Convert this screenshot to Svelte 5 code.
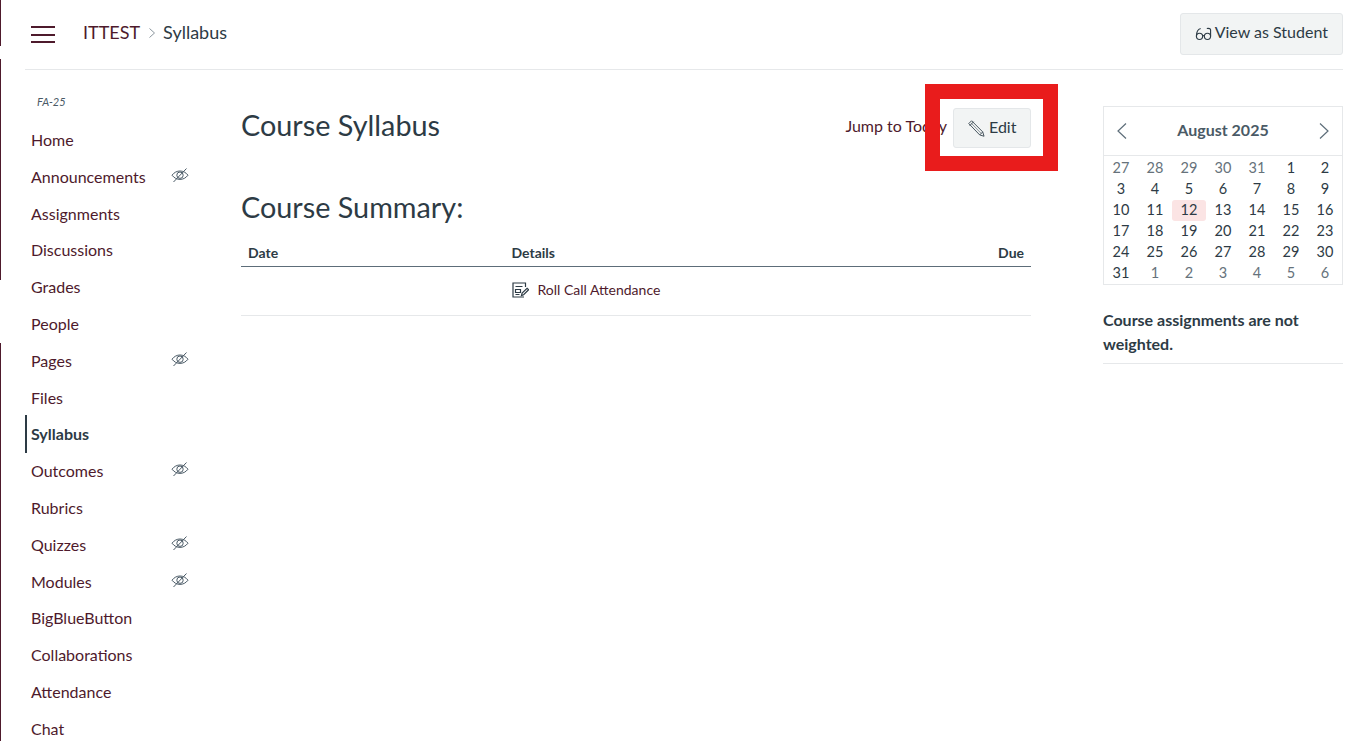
<script>
  const nav = [
    { label: 'Home' },
    { label: 'Announcements', hidden: true },
    { label: 'Assignments' },
    { label: 'Discussions' },
    { label: 'Grades' },
    { label: 'People' },
    { label: 'Pages', hidden: true },
    { label: 'Files' },
    { label: 'Syllabus', active: true },
    { label: 'Outcomes', hidden: true },
    { label: 'Rubrics' },
    { label: 'Quizzes', hidden: true },
    { label: 'Modules', hidden: true },
    { label: 'BigBlueButton' },
    { label: 'Collaborations' },
    { label: 'Attendance' },
    { label: 'Chat' }
  ];

  // August 2025 grid, faded days belong to the other months
  const days = [
    [27, 1], [28, 1], [29, 1], [30, 1], [31, 1], [1], [2],
    [3], [4], [5], [6], [7], [8], [9],
    [10], [11], [12, 0, 1], [13], [14], [15], [16],
    [17], [18], [19], [20], [21], [22], [23],
    [24], [25], [26], [27], [28], [29], [30],
    [31], [1, 1], [2, 1], [3, 1], [4, 1], [5, 1], [6, 1]
  ];
</script>

{#snippet eyeOff()}
  <svg class="eye" viewBox="0 0 18 16" width="18" height="16" fill="none" stroke="#4a5a66" stroke-width="1">
    <path d="M1 8.200C3.200 5.400 5.900 4 9 4s5.800 1.400 8 4.200c-2.200 2.800-4.900 4.200-8 4.200s-5.800-1.400-8-4.200z" />
    <circle cx="9" cy="8.200" r="3.200" />
    <path d="M2.500 15L15.500 1.500" />
  </svg>
{/snippet}

<div class="page">
  <div class="edge"></div>

  <header>
    <button class="burger" aria-label="Menu"><span></span><span></span><span></span></button>
    <nav class="crumbs">
      <span>ITTEST</span>
      <svg viewBox="0 0 8 12" width="8" height="12" fill="none" stroke="#8b969e" stroke-width="1"><path d="M1.500 1.500L6.500 6l-5 4.500" /></svg>
      <span class="cur">Syllabus</span>
    </nav>
    <button class="btn student">
      <svg viewBox="0 0 18 14" width="17" height="14" fill="none" stroke="#2d3b45" stroke-width="1.200">
        <circle cx="4.800" cy="9.500" r="3.300" />
        <circle cx="13.200" cy="9.500" r="3.300" />
        <path d="M8.100 9c.6-.4 1.200-.4 1.800 0M1.500 9.500C1.500 5 3 2 6 1.200M16.500 9.500V2.500C16.500 1.500 15 .8 12.500 1.200" />
      </svg>
      <span class="lbl">View as Student</span>
    </button>
  </header>

  <div class="body">
    <aside class="side">
      <div class="term">FA-25</div>
      <ul>
        {#each nav as item}
          <li class:active={item.active}>
            <span>{item.label}</span>
            {#if item.hidden}{@render eyeOff()}{/if}
          </li>
        {/each}
      </ul>
    </aside>

    <main>
      <div class="title-row">
        <h1>Course Syllabus</h1>
        <div class="tools">
          <span class="jump">Jump to Today</span>
          <button class="btn edit">
            <svg viewBox="0 0 18 18" width="17" height="17" fill="none" stroke="#3d4b55" stroke-width="1">
              <path d="M3.800 .8L.8 3.800l11.600 12 4.600 1.400-1.400-4.600z" />
              <path d="M1.800 6l4.200-4.200M12.400 15.800l3.200-3.200" />
              <path d="M3.500 3.500l10.500 10.800" stroke-width=".6" />
            </svg>
            <span class="lbl edit-lbl">Edit</span>
          </button>
        </div>
      </div>

      <h2>Course Summary:</h2>

      <table>
        <thead>
          <tr><th class="date">Date</th><th>Details</th><th class="due">Due</th></tr>
        </thead>
        <tbody>
          <tr>
            <td></td>
            <td>
              <div class="event">
                <svg viewBox="0 0 17 16" width="17" height="16" fill="none" stroke="#2d3b45" stroke-width="1.200">
                  <path d="M13.500 5V1H1v14h11" />
                  <path d="M3.500 4.500h7M3.500 7.500h5v3h-5zM3.500 12.500h4" />
                  <path d="M9.500 13.500l.6-2.400 5-4.800 1.500 1.500-5 4.900z" />
                </svg>
                <span>Roll Call Attendance</span>
              </div>
            </td>
            <td></td>
          </tr>
        </tbody>
      </table>
    </main>

    <aside class="right">
      <div class="cal">
        <div class="cal-head">
          <svg viewBox="0 0 12 18" width="12" height="18" fill="none" stroke="#5d6d79" stroke-width="1.200"><path d="M10 1.500L2 9l8 7.500" /></svg>
          <span class="month">August 2025</span>
          <svg viewBox="0 0 12 18" width="12" height="18" fill="none" stroke="#5d6d79" stroke-width="1.200"><path d="M2 1.500L10 9l-8 7.500" /></svg>
        </div>
        <div class="cal-grid">
          {#each days as [d, other, today]}
            <div class="day" class:other class:today>{d}</div>
          {/each}
        </div>
      </div>
      <p class="weight">Course assignments are not weighted.</p>
    </aside>
  </div>

  <!-- red highlight drawn over the screenshot -->
  <div class="mark"></div>
</div>

<style>
  * { box-sizing: border-box; }

  :global(body) {
    font-family: Lato, sans-serif;
    color: #2d3b45;
    background: #fff;
  }

  .page {
    position: relative;
    height: 741px;
    overflow: hidden;
    padding: 0 26px 0 25px;
  }

  .edge {
    position: absolute;
    left: 0;
    top: 0;
    bottom: 0;
    width: 1px;
    background: linear-gradient(#4e1a2c 0 46px, #fff 46px 59px, #4e1a2c 59px 280px, #fff 280px 343px, #4e1a2c 343px);
  }

  header {
    height: 70px;
    display: flex;
    align-items: center;
    border-bottom: 1px solid #e6e8ea;
  }

  .burger {
    width: 24px;
    height: 17px;
    margin: 0 28px 0 6px;
    padding: 0;
    border: 0;
    background: none;
    display: flex;
    flex-direction: column;
    justify-content: space-between;
  }

  .burger span {
    display: block;
    height: 2px;
    background: #4e1a2c;
  }

  .crumbs {
    display: flex;
    align-items: center;
    gap: 7.500px;
    font-size: 18px;
    color: #4e1a2c;
    margin-bottom: 6px;
  }

  .crumbs svg { margin-top: 3px; }

  .cur { color: #2d3b45; }

  .btn {
    font-family: Lato, sans-serif;
    font-size: 16px;
    color: #2d3b45;
    background: #f2f4f4;
    border: 1px solid #e4e7e9;
    border-radius: 3px;
    display: flex;
    align-items: center;
  }

  .lbl { margin-bottom: 5px; }
  .edit-lbl { margin-bottom: 3px; }

  .student {
    margin-left: auto;
    margin-bottom: 1px;
    height: 42px;
    padding: 0 14px;
    gap: 3px;
  }

  .body { display: flex; }

  .side {
    width: 216px;
    flex: none;
  }

  .term {
    font-size: 11px;
    font-style: italic;
    color: #4a5a66;
    padding: 25px 0 0 12px;
    height: 51.200px;
  }

  ul {
    list-style: none;
    margin: 0;
    padding: 0;
    width: 164px;
  }

  li {
    height: 36.800px;
    padding-left: 6px;
    display: flex;
    align-items: center;
    justify-content: space-between;
    font-size: 16px;
    color: #4e1a2c;
    position: relative;
  }

  li.active {
    font-weight: 700;
    color: #2d3b45;
  }

  li.active::before {
    content: '';
    position: absolute;
    left: 0;
    top: -1px;
    bottom: -1px;
    width: 2px;
    background: #2d3b45;
  }

  .eye { margin-top: -3px; }

  main {
    width: 790px;
    flex: none;
  }

  .title-row {
    height: 78px;
    padding-top: 36px;
    display: flex;
    justify-content: space-between;
    align-items: flex-start;
  }

  h1 {
    margin: 0;
    font-size: 28.800px;
    font-weight: 400;
    line-height: 38px;
  }

  .tools {
    display: flex;
    align-items: center;
    gap: 6px;
    margin-top: 2px;
  }

  .jump {
    font-size: 16px;
    color: #4e1a2c;
    margin-bottom: 5px;
  }

  .edit {
    width: 78px;
    height: 40px;
    padding: 0 0 0 14px;
    gap: 4px;
  }

  h2 {
    margin: 40px 0 0;
    font-size: 28.800px;
    font-weight: 400;
    line-height: 38px;
  }

  table {
    width: 100%;
    margin-top: 14px;
    border-collapse: collapse;
    font-size: 14px;
  }

  th {
    text-align: left;
    font-weight: 700;
    height: 26px;
    padding: 0;
    border-bottom: 1px solid #5d6d79;
  }

  th.date { width: 270.500px; padding-left: 7px; }
  th.due { text-align: right; padding-right: 7px; }

  td {
    height: 49px;
    padding: 0;
    border-bottom: 1px solid #e6e8ea;
  }

  .event {
    display: flex;
    align-items: center;
    gap: 9px;
    color: #4e1a2c;
    margin-bottom: 2px;
  }

  .right {
    width: 240px;
    margin-left: 72px;
    flex: none;
    padding-top: 36px;
  }

  .cal { border: 1px solid #e6e8ea; }

  .cal-head {
    height: 49px;
    padding: 0 12px;
    display: flex;
    align-items: center;
    justify-content: space-between;
    font-size: 16px;
    font-weight: 700;
    color: #4a5a66;
    border-bottom: 1px solid #e6e8ea;
  }

  .month { margin-bottom: 4px; }

  .cal-grid {
    display: grid;
    grid-template-columns: repeat(7, 1fr);
    padding: 2.450px 0 1px;
  }

  .day {
    height: 20.830px;
    margin: 0;
    text-align: center;
    font-size: 14.500px;
    line-height: 20.830px;
  }

  .day.other { color: #66727b; }

  .day.today {
    background: #fbe4e4;
    border-radius: 3px;
  }

  .weight {
    margin: 23px 0 0;
    padding-bottom: 7px;
    font-size: 16px;
    font-weight: 700;
    line-height: 24px;
    border-bottom: 1px solid #e6e8ea;
  }

  .mark {
    position: absolute;
    left: 925px;
    top: 84px;
    width: 133px;
    height: 87px;
    border: 15px solid #e91c1c;
  }
</style>
